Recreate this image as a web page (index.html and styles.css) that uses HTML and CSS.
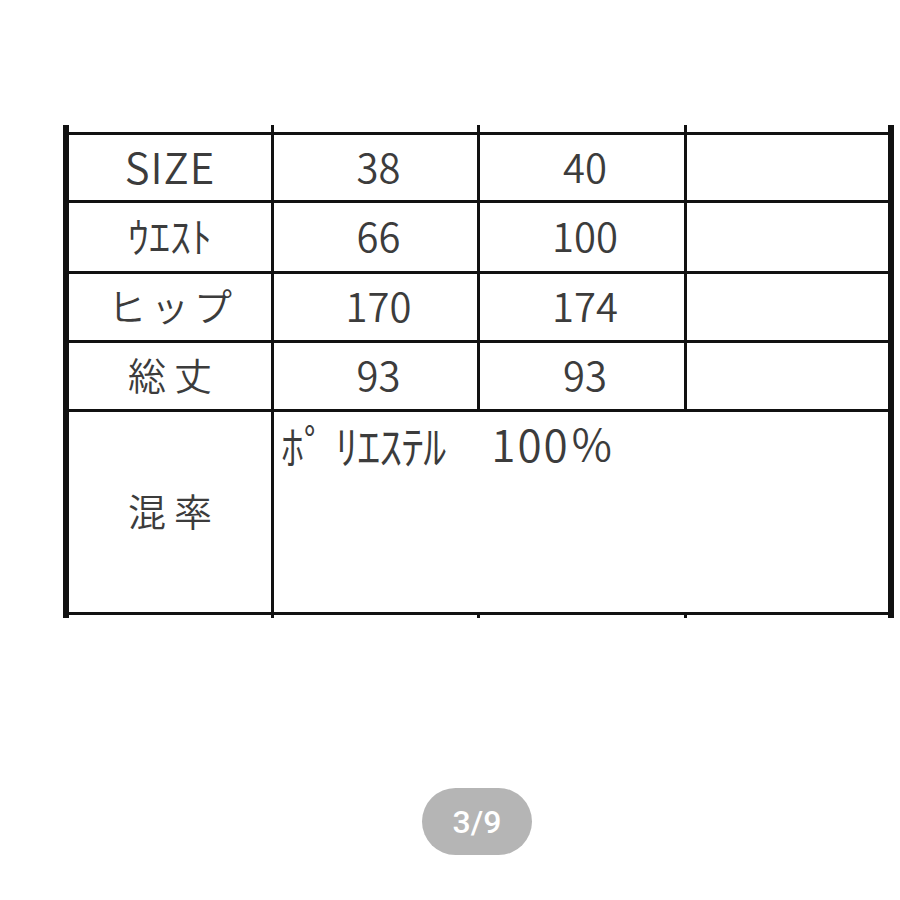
FILE: index.html
```html
<!DOCTYPE html>
<html lang="ja">
<head>
<meta charset="utf-8">
<title>SIZE</title>
<link rel="stylesheet" href="styles.css">
</head>
<body>
<div class="sheet">
  <div class="tick"></div><div class="tick"></div><div class="tick"></div><div class="tick"></div>
  <div class="cell latin">SIZE</div>
  <div class="cell num">38</div>
  <div class="cell num">40</div>
  <div class="cell"></div>
  <div class="cell half">ｳｴｽﾄ</div>
  <div class="cell num">66</div>
  <div class="cell num">100</div>
  <div class="cell"></div>
  <div class="cell wide">ヒップ</div>
  <div class="cell num">170</div>
  <div class="cell num">174</div>
  <div class="cell"></div>
  <div class="cell kanji">総丈</div>
  <div class="cell num">93</div>
  <div class="cell num">93</div>
  <div class="cell"></div>
  <div class="cell kanji">混率</div>
  <div class="cell blend"><span class="fiber">ﾎﾟ ﾘｴｽﾃﾙ</span><span class="pct">100％</span></div>
  <div class="tick"></div><div class="tick"></div><div class="tick"></div><div class="tick"></div>
</div>
<div class="pager">3/9</div>
</body>
</html>
```
FILE: styles.css
```css
html, body {
  margin: 0;
  padding: 0;
  background: #ffffff;
}
body {
  font-family: "Noto Sans CJK JP", "Noto Sans", sans-serif;
  font-weight: 350;
  color: #3c3c3c;
}
.sheet {
  display: grid;
  grid-template-columns: 202px 203px 204px 201px;
  grid-template-rows: 7px 65px 68px 66px 66px 200px 3px;
  gap: 3px;
  padding: 0 6px;
  background: #111111;
  width: 819px;
  margin: 125px 0 0 63px;
}
.tick {
  background: #ffffff;
}
.cell {
  background: #ffffff;
  display: flex;
  align-items: center;
  justify-content: center;
  font-size: 40px;
  line-height: 1;
  padding-bottom: 4px;
}
.latin {
  font-size: 42px;
  letter-spacing: 1px;
}
.num {
  font-size: 40px;
  padding-left: 6px;
}
.half {
  font-size: 42px;
}
.wide {
  font-size: 38px;
  letter-spacing: 5px;
  padding-left: 5px;
}
.kanji {
  font-size: 38px;
  letter-spacing: 8px;
  padding-left: 8px;
}
.blend {
  grid-column: 2 / 5;
  justify-content: flex-start;
  align-items: flex-start;
  padding: 9px 0 0 7px;
  gap: 46px;
  font-size: 46px;
}
.fiber {
  letter-spacing: -1px;
}
.pct {
  font-size: 44px;
  letter-spacing: 2px;
}
.pager {
  width: 110px;
  height: 67px;
  margin: 170px 0 0 422px;
  border-radius: 34px;
  background: #b5b5b5;
  color: #ffffff;
  font-family: Roboto, "Noto Sans", sans-serif;
  font-weight: 500;
  font-size: 32px;
  display: flex;
  align-items: center;
  justify-content: center;
}
```
